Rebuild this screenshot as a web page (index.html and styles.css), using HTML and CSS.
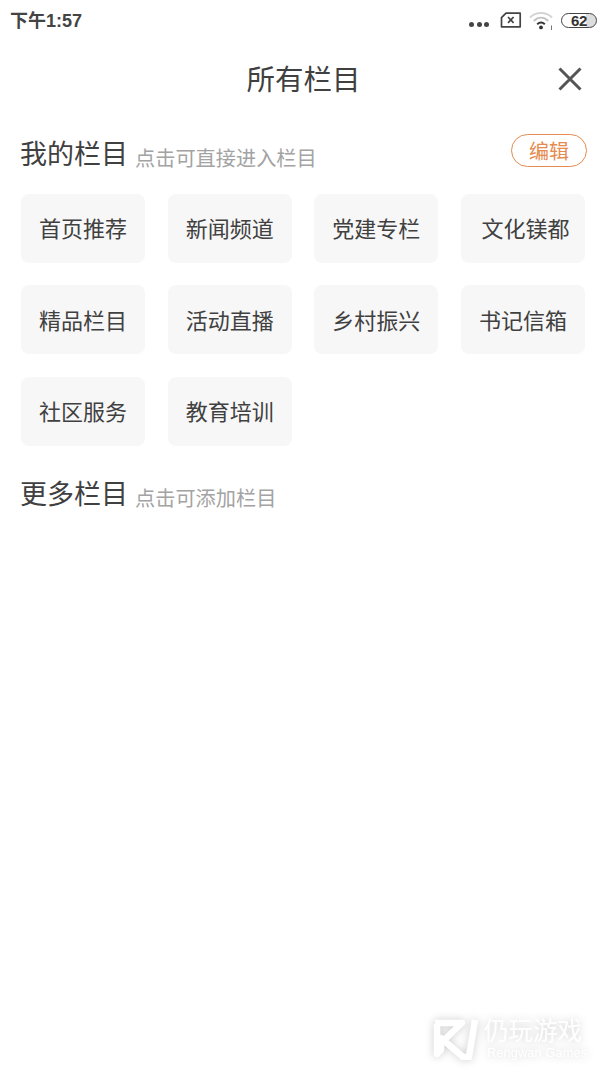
FILE: index.html
```html
<!DOCTYPE html>
<html lang="zh-CN">
<head>
<meta charset="utf-8">
<title>所有栏目</title>
<link rel="stylesheet" href="styles.css">
</head>
<body>
<div class="page">
  <header class="status">
    <span class="time">下午1:57</span>
    <div class="status-icons">
      <span class="dots"><i></i><i></i><i></i></span>
      <svg class="sim" width="22" height="16" viewBox="0 0 22 16"><path d="M6 1.2H20.2V14.8H1.5V5.6Z" fill="none" stroke="#444" stroke-width="1.7" stroke-linejoin="round"/><path d="M8 5L13.6 10.8M13.6 5L8 10.8" stroke="#444" stroke-width="1.7"/></svg>
      <svg class="wifi" width="26" height="20" viewBox="0 0 26 20"><path d="M1 7.5C7 1.5 17 1.5 23 7.5" fill="none" stroke="#d4d4d4" stroke-width="2"/><path d="M4.8 11C9.2 6.8 14.8 6.8 19.2 11" fill="none" stroke="#c4c4c4" stroke-width="2"/><path d="M8.2 14.2C10.6 12 13.4 12 15.8 14.2" fill="none" stroke="#333" stroke-width="2"/><circle cx="12" cy="17.4" r="1.9" fill="#333"/><path d="M22.5 15.5V20" stroke="#777" stroke-width="1"/></svg>
      <span class="battery"><b>62</b></span>
    </div>
  </header>
  <div class="titlebar">
    <h1 class="title">所有栏目</h1>
    <svg class="close" width="26" height="26" viewBox="0 0 26 26"><path d="M2.5 2.5L23.5 23.5M23.5 2.5L2.5 23.5" stroke="#555" stroke-width="3"/></svg>
  </div>
  <section class="mine">
    <div class="section-head">
      <h2>我的栏目</h2><span class="hint">点击可直接进入栏目</span>
      <button class="edit">编辑</button>
    </div>
    <div class="grid">
      <div class="tile">首页推荐</div>
      <div class="tile">新闻频道</div>
      <div class="tile">党建专栏</div>
      <div class="tile shifted">文化镁都</div>
      <div class="tile">精品栏目</div>
      <div class="tile">活动直播</div>
      <div class="tile">乡村振兴</div>
      <div class="tile">书记信箱</div>
      <div class="tile">社区服务</div>
      <div class="tile">教育培训</div>
    </div>
  </section>
  <section class="more">
    <div class="section-head">
      <h2>更多栏目</h2><span class="hint">点击可添加栏目</span>
    </div>
  </section>
  <div class="watermark">
    <svg class="wm-logo" width="48" height="42" viewBox="0 0 48 42"><path d="M3 5H30L10 24M5 6V36L9 32V20L31 39H37L43 2" fill="none" stroke="#fff" stroke-width="6.5" stroke-linejoin="round"/></svg>
    <div class="wm-text"><span class="wm-cn">仍玩游戏</span><span class="wm-en">Rengwan Games</span></div>
  </div>
</div>
</body>
</html>
```
FILE: styles.css
```css
* { box-sizing: border-box; margin: 0; padding: 0; }
html, body { background: #fff; }
body { font-family: "Noto Sans CJK SC", "Liberation Sans", sans-serif; color: #333; overflow: hidden; }
.page { position: relative; width: 607px; height: 1080px; padding: 0 21px; overflow: hidden; }
.status { display: flex; justify-content: space-between; align-items: center; height: 40px; margin: -1px -11px 1px -10px; }
.time { font-family: "Liberation Sans", "Noto Sans CJK SC", sans-serif; font-size: 18px; font-weight: 700; color: #444; margin-left: -1px; }
.status-icons { display: flex; align-items: center; margin-top: 2px; }
.dots { display: flex; gap: 2.5px; margin: 9px 11px 0 2px; }
.dots i { display: block; width: 5px; height: 5px; border-radius: 50%; background: #444; }
.sim { margin-right: 7px; }
.wifi { margin-right: 6px; }
.battery { position: relative; display: flex; justify-content: center; align-items: center; width: 36px; height: 15px; border: 1.5px solid #444; border-radius: 8px; background: linear-gradient(90deg, #fff 72%, #ddd 72%); }
.battery b { font-family: "Liberation Sans", sans-serif; font-size: 15px; letter-spacing: -.3px; color: #333; }
.titlebar { position: relative; display: flex; justify-content: center; align-items: center; height: 76px; }
.title { font-size: 28.5px; font-weight: 400; line-height: 76px; color: #404040; }
.close { position: absolute; right: 3px; top: 26px; }
.section-head { display: flex; align-items: baseline; height: 38px; position: relative; }
.section-head h2 { margin-left: -1px; font-size: 27px; font-weight: 400; line-height: 38px; color: #404040; }
.hint { position: relative; top: 2px; font-size: 20.2px; color: #a3a3a3; margin-left: 7px; }
.edit { position: absolute; right: -1px; top: 0; width: 76px; height: 33px; border: 1px solid #e58a50; border-radius: 17px; background: #fff; color: #e58a50; font: 400 20px "Noto Sans CJK SC", sans-serif; }
.mine { margin-top: 18px; }
.grid { display: grid; grid-template-columns: repeat(4, 124px); column-gap: 22.67px; row-gap: 22.5px; margin-top: 21.7px; }
.tile { display: flex; justify-content: center; align-items: center; height: 69px; padding-bottom: 2px; border-radius: 8px; background: #f7f7f7; font-size: 22px; color: #404040; }
.tile.shifted { padding-left: 5px; }
.more { margin-top: 28.3px; }
.watermark { position: absolute; left: 432px; top: 1016px; display: flex; gap: 4px; filter: drop-shadow(0 0 4px rgba(0,0,0,.2)); }
.wm-logo { margin-top: 2px; }
.wm-text { display: flex; flex-direction: column; color: #fff; }
.wm-cn { font-size: 24.5px; line-height: 28px; letter-spacing: 0; }
.wm-en { font-family: "Liberation Sans", sans-serif; font-size: 12.8px; line-height: 16px; margin: 1px 0 0 3px; letter-spacing: .1px; }
```
